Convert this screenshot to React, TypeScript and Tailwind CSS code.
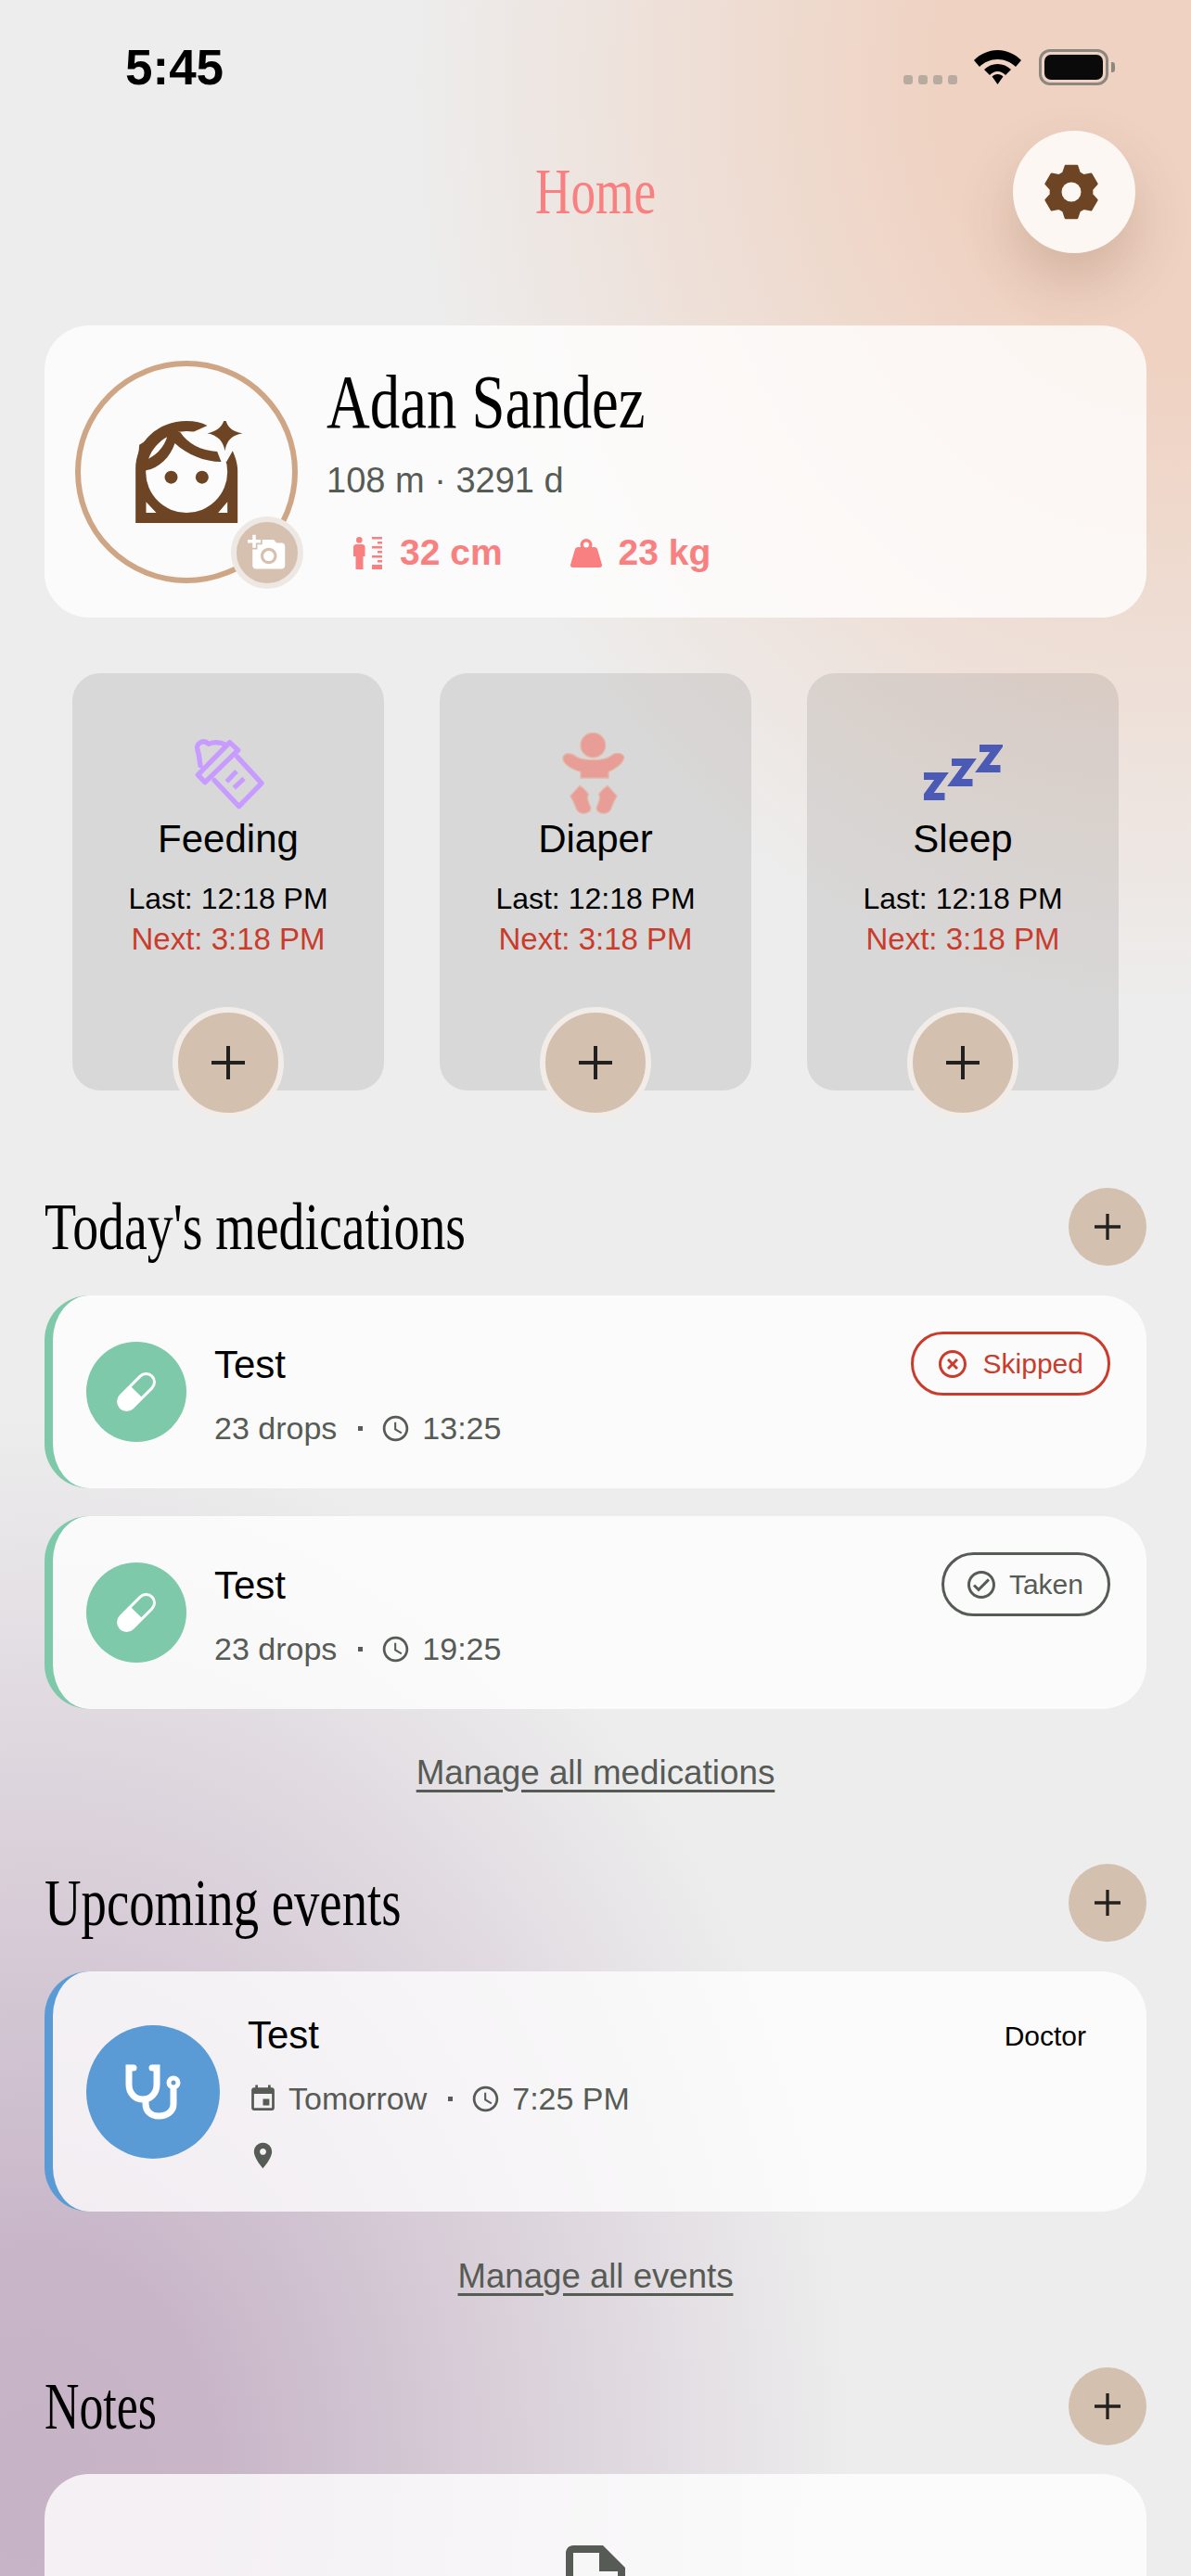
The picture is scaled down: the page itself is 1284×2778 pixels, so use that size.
import React from 'react'

const sans = "font-['Liberation_Sans','Inter',sans-serif]"
const serif = "font-['Liberation_Serif','Times_New_Roman',serif]"

const paths = {
  camera: 'M3 4V1h2v3h3v2H5v3H3V6H0V4h3zm3 6V7h3V4h7l1.83 2H21c1.1 0 2 .9 2 2v12c0 1.1-.9 2-2 2H5c-1.1 0-2-.9-2-2V10h3zm7 9c2.76 0 5-2.24 5-5s-2.24-5-5-5-5 2.24-5 5 2.24 5 5 5zm-3.2-5c0 1.77 1.43 3.2 3.2 3.2s3.2-1.43 3.2-3.2-1.43-3.2-3.2-3.2-3.2 1.43-3.2 3.2z',
  clock: 'M11.99 2C6.47 2 2 6.48 2 12s4.47 10 9.99 10C17.52 22 22 17.52 22 12S17.52 2 11.99 2zM12 20c-4.42 0-8-3.58-8-8s3.58-8 8-8 8 3.58 8 8-3.58 8-8 8zm.5-13H11v6l5.25 3.15.75-1.23-4.5-2.67z',
  skipped: 'M14.59 8L12 10.59 9.41 8 8 9.41 10.59 12 8 14.59 9.41 16 12 13.41 14.59 16 16 14.59 13.41 12 16 9.41 14.59 8zM12 2C6.47 2 2 6.47 2 12s4.47 10 10 10 10-4.47 10-10S17.53 2 12 2zm0 18c-4.41 0-8-3.59-8-8s3.59-8 8-8 8 3.59 8 8-3.59 8-8 8z',
  taken: 'M16.59 7.58L10 14.17l-2.59-2.58L6 13l4 4 8-8zM12 2C6.48 2 2 6.48 2 12s4.48 10 10 10 10-4.48 10-10S17.52 2 12 2zm0 18c-4.42 0-8-3.58-8-8s3.58-8 8-8 8 3.58 8 8-3.58 8-8 8z',
  event: 'M17 12h-5v5h5v-5zM16 1v2H8V1H6v2H5c-1.11 0-1.99.9-1.99 2L3 19c0 1.1.89 2 2 2h14c1.1 0 2-.9 2-2V5c0-1.1-.9-2-2-2h-1V1h-2zm3 18H5V8h14v11z',
  pin: 'M12 2C8.13 2 5 5.13 5 9c0 5.25 7 13 7 13s7-7.75 7-13c0-3.87-3.13-7-7-7zm0 9.5c-1.38 0-2.5-1.12-2.5-2.5s1.12-2.5 2.5-2.5 2.5 1.12 2.5 2.5-1.12 2.5-2.5 2.5z',
  doc: 'M8 16h8v2H8zm0-4h8v2H8zm6-10H6c-1.1 0-2 .9-2 2v16c0 1.1.89 2 2 2h12c1.1 0 2-.9 2-2V8l-6-6zm4 18H6V4h7v5h5v11z',
}

const MatIcon = ({ d, className }: { d: string; className: string }) => (
  <svg viewBox="0 0 24 24" fill="currentColor" className={className}>
    <path d={d} />
  </svg>
)

// six tooth gear, chunkier than the stock material one
const gearPoints = [0, 60, 120, 180, 240, 300]
  .flatMap(t => [
    [29, t - 12.5],
    [29, t + 12.5],
    [22.5, t + 23],
    [22.5, t + 37],
  ])
  .map(([r, a]) => {
    const rad = ((a - 90) * Math.PI) / 180
    return `${(r * Math.cos(rad)).toFixed(2)},${(r * Math.sin(rad)).toFixed(2)}`
  })
  .join(' ')

const GearIcon = () => (
  <svg viewBox="-36 -36 72 72" className="w-[72px] h-[72px] -ml-[6px] text-[#6d4524]">
    <polygon points={gearPoints} fill="currentColor" stroke="currentColor" strokeWidth="2" strokeLinejoin="round" />
    <circle r="10.500" fill="#fdf7f3" />
  </svg>
)

const PlusIcon = () => (
  <svg viewBox="0 0 36 36" className="w-[36px] h-[36px] text-[#23211f]" stroke="currentColor" strokeWidth="4">
    <path d="M18 0V36M0 18H36" />
  </svg>
)

const FaceIcon = () => (
  <svg viewBox="258 253 350 330" className="w-[117px] h-[110px]">
    <path fill="#6d4524" d="M258 583V410C258 320 330 253 423 253C450 253 472 258 490 268L445 288L403 290C425 325 470 350 522 352L540 385L552 385L572 350C583 375 588 395 588 415V583Z" />
    <circle cx="423" cy="418" r="132" fill="#fdfcfc" />
    <path fill="#fdfcfc" d="M292 515L325 550H292ZM555 515L525 550H555Z" />
    <path fill="#6d4524" d="M292 413C335 405 370 370 385 325C425 362 480 385 535 385L522 352C470 350 425 325 403 290L350 280L270 330L262 420Z" />
    <path fill="#fdfcfc" d="M300 375C310 345 335 318 360 305C350 335 330 360 300 375Z" />
    <circle cx="373" cy="435" r="21" fill="#6d4524" />
    <circle cx="473" cy="435" r="21" fill="#6d4524" />
    <path fill="#6d4524" d="M547 238C552 270 565 285 604 293C565 300 552 320 547 350C542 320 525 300 490 293C525 285 542 270 547 238Z" />
  </svg>
)

const HeightIcon = () => (
  <svg viewBox="0 0 31 35" className="w-[31px] h-[35px]" fill="currentColor">
    <circle cx="6.3" cy="3.4" r="3.3" />
    <path d="M0 11C0 9 1.5 8 3 8H9.5C11 8 12.5 9 12.5 11V21H10.5V35H2.5V21H0Z" />
    <path d="M20 0H31V2.5H20ZM26 5H31V7.5H26ZM20 10H31V12.5H20ZM26 15H31V17.5H26ZM20 20H31V22.5H20ZM26 25H31V27.5H26ZM20 30H31V35H20Z" />
  </svg>
)

const WeightIcon = () => (
  <svg viewBox="0 0 34 31" className="w-[34px] h-[31px]" fill="currentColor">
    <path fillRule="evenodd" d="M17 0A6.5 6.5 0 0 1 23 9H26C27.5 9 28.5 10 29 11L34 28C34.3 30 33 31 31.5 31H2.5C1 31 -.3 30 0 28L5 11C5.500 10 6.500 9 8 9H11A6.500 6.500 0 0 1 17 0ZM17 3.500A3 3 0 1 0 17 9.500A3 3 0 1 0 17 3.500Z" />
  </svg>
)

const BottleIcon = () => (
  <svg viewBox="0 0 330 300" className="w-[110px] h-[100px]" fill="none" stroke="#c79bff" strokeWidth="16" strokeLinejoin="round" strokeLinecap="round">
    <path d="M195 100L273 185L200 260L120 175" />
    <path d="M170 53L197 78L90 182L67 158Z" />
    <path d="M75 128C72 110 72 95 66 78C58 55 85 42 102 58C120 50 140 52 160 62" />
    <path d="M160 180L192 146M184 200L216 170" strokeWidth="15" strokeLinecap="butt" />
  </svg>
)

const BabyIcon = () => (
  <svg viewBox="0 0 330 300" className="w-[110px] h-[100px]" fill="#e89d97" stroke="#e2b8a8" strokeWidth="4">
    <circle cx="157" cy="62" r="40" />
    <path d="M60 100C67 85 87 88 97 95C122 115 192 115 217 95C227 85 252 85 257 100C257 120 227 140 207 148V168H117V148C92 140 57 125 60 100Z" />
    <path d="M114 193C124 200 134 208 142 220C135 232 142 248 149 262C152 280 122 292 105 272C99 255 92 240 84 226C94 215 104 204 114 193Z" />
    <path d="M204 193C194 200 184 208 176 220C183 232 176 248 169 262C166 280 196 292 213 272C219 255 226 240 234 226C224 215 214 204 204 193Z" />
  </svg>
)

const SleepIcon = () => (
  <svg viewBox="0 0 85 60" className="w-[85px] h-[60px]" fill="none" stroke="#4b5bb5" strokeWidth="8" strokeLinejoin="miter">
    <path d="M0 34H19L3 56H22.500" />
    <path d="M30 19H49L33 41H52.500" />
    <path d="M60 4H79L63 26H82.500" />
  </svg>
)

const PillIcon = () => (
  <svg viewBox="0 0 42 42" className="w-[42px] h-[42px]">
    <g transform="rotate(-45 21 21)">
      <rect x="-2.850" y="12" width="47.700" height="18" rx="9" fill="none" stroke="#fff" strokeWidth="3" />
      <path d="M21 12H6.150A9 9 0 0 0 6.150 30H21Z" fill="#fff" />
    </g>
  </svg>
)

const StethIcon = () => (
  <svg viewBox="0 0 60 60" className="w-[60px] h-[60px]" fill="none" stroke="#fff" strokeWidth="7" strokeLinecap="round">
    <path d="M9 4H4V22C4 32 11 38 19 38C27 38 34 32 34 22V4H29" />
    <path d="M22 38V43C22 51 28 56 36 56C45 56 52 51 52 43V28" />
    <circle cx="52" cy="20" r="5" strokeWidth="5" />
  </svg>
)

const tiles = [
  { label: 'Feeding', Icon: BottleIcon },
  { label: 'Diaper', Icon: BabyIcon },
  { label: 'Sleep', Icon: SleepIcon },
]

const AddButton = () => (
  <button className="w-[84px] h-[84px] rounded-full bg-[#d4c0af] flex items-center justify-center shrink-0">
    <svg viewBox="0 0 28 28" className="w-[28px] h-[28px] text-[#23211f]" stroke="currentColor" strokeWidth="3.300">
      <path d="M14 0V28M0 14H28" />
    </svg>
  </button>
)

const SectionHeader = ({ title, className, titleClass }: { title: string; className: string; titleClass: string }) => (
  <div className={`flex items-center justify-between h-[84px] ${className}`}>
    <h2 className={`${serif} text-[72px] leading-[84px] text-black whitespace-nowrap origin-left ${titleClass}`}>{title}</h2>
    <AddButton />
  </div>
)

const Dot = () => <span className="w-[5px] h-[5px] bg-[#565b56] ml-[23px] mr-[22px] shrink-0" />

const MedCard = ({ time, status }: { time: string; status: 'Skipped' | 'Taken' }) => (
  <div className="h-[208px] rounded-[48px] border-l-[9px] border-[#7dc9a9] bg-white/80 flex pl-[36px] pr-[39px]">
    <div className="w-[108px] h-[108px] mt-[50px] rounded-full bg-[#7dc9a9] flex items-center justify-center shrink-0">
      <PillIcon />
    </div>
    <div className="ml-[30px] pt-[51px]">
      <div className="text-[42px] leading-[48px] text-black">Test</div>
      <div className="mt-[24px] flex items-center text-[34px] leading-[40px] text-[#565b56]">
        <span>23 drops</span>
        <Dot />
        <MatIcon d={paths.clock} className="w-[33px] h-[33px] -ml-[3px]" />
        <span className="ml-[12px]">{time}</span>
      </div>
    </div>
    {status === 'Skipped' ? (
      <div className="ml-auto mt-[39px] h-[69px] rounded-full border-[3.5px] border-[#c93c2c] text-[#c93c2c] flex items-center pl-[27px] pr-[26px] text-[30px]">
        <MatIcon d={paths.skipped} className="w-[36px] h-[36px] -ml-[3px]" />
        <span className="ml-[15px]">Skipped</span>
      </div>
    ) : (
      <div className="ml-auto mt-[39px] h-[69px] rounded-full border-[3.5px] border-[#565b56] text-[#565b56] flex items-center pl-[25px] pr-[26px] text-[30px]">
        <MatIcon d={paths.taken} className="w-[36px] h-[36px] -ml-[3px]" />
        <span className="ml-[12px]">Taken</span>
      </div>
    )}
  </div>
)

export default function App() {
  return (
    <div
      className={`${sans} relative w-[1284px] h-[2778px] overflow-hidden bg-[#ededed] bg-[radial-gradient(ellipse_820px_1000px_at_1260px_90px,#efd2c2_0%,#efd2c2_30%,rgba(239,210,194,0)_100%),radial-gradient(ellipse_880px_1150px_at_40px_2680px,#c6b3c6_0%,#c8b6c8_22%,rgba(198,179,198,0)_100%)]`}
    >
      {/* status bar */}
      <div className="h-[141px] flex items-start pl-[135px] pr-[82px]">
        <span className="mt-[44px] text-[53px] leading-[58px] font-bold text-black">5:45</span>
        <div className="ml-auto mt-[53px] flex items-start">
          <div className="mt-[28px] flex gap-[6px]">
            {[0, 1, 2, 3].map(i => (
              <span key={i} className="w-[10px] h-[10px] rounded-[3px] bg-[#b8aca0]" />
            ))}
          </div>
          <svg viewBox="0 0 51 37" className="w-[51px] h-[37px] ml-[18px] mt-[1px]" fill="#000">
            <path d="M25.500 0C35 0 44 4 51 11L45 18C40 13 33 10 25.500 10C18 10 11 13 6 18L0 11C7 4 16 0 25.500 0Z" />
            <path d="M25.500 15C31 15 36 17 40 21L34 27C32 25 29 23 25.500 23C22 23 19 25 17 27L11 21C15 17 20 15 25.500 15Z" />
            <path d="M25.500 26C28 26 30 27 31.500 28.500L25.500 37L19.500 28.500C21 27 23 26 25.500 26Z" />
          </svg>
          <div className="ml-[19px] flex items-center">
            <div className="w-[75px] h-[39px] rounded-[12px] border-[3px] border-[#8c8880] p-[3px]">
              <div className="w-full h-full rounded-[7px] bg-[#0a0a0a]" />
            </div>
            <span className="ml-[3px] w-[4px] h-[11px] rounded-r-[3px] bg-[#8c8880]" />
          </div>
        </div>
      </div>

      {/* header */}
      <div className="h-[132px] px-[60px] grid grid-cols-[132px_1fr_132px] items-center">
        <span />
        <h1 className={`${serif} text-center text-[70px] leading-[80px] text-[#f98080] scale-x-[0.76]`}>Home</h1>
        <button className="w-[132px] h-[132px] rounded-full bg-[#fdf7f3] shadow-[0_30px_60px_rgba(110,70,40,0.22)] flex items-center justify-center">
          <GearIcon />
        </button>
      </div>

      <main className="px-[48px]">
        {/* profile */}
        <section className="mt-[78px] h-[315px] rounded-[48px] bg-white/80 flex items-center pl-[33px]">
          <div className="relative w-[240px] h-[240px] rounded-full border-[6px] border-[#cfa685] flex items-center justify-center shrink-0">
            <div className="ml-[7px]">
              <FaceIcon />
            </div>
            <div className="absolute left-[162px] top-[162px] w-[78px] h-[78px] rounded-full border-[6px] border-[#ede8e4] bg-[#d6c1b0] flex items-center justify-center text-white">
              <MatIcon d={paths.camera} className="w-[42px] h-[42px]" />
            </div>
          </div>
          <div className="ml-[31px] self-start mt-[38px]">
            <div className={`${serif} text-[82px] leading-[90px] text-black whitespace-nowrap origin-left scale-x-[0.79]`}>Adan Sandez</div>
            <div className="mt-[17px] text-[38px] leading-[44px] text-[#565b56]">108 m · 3291 d</div>
            <div className="mt-[33px] pl-[29px] flex items-center text-[39px] leading-[46px] font-bold text-[#f98080]">
              <HeightIcon />
              <span className="ml-[19px]">32 cm</span>
              <span className="ml-[73px]"><WeightIcon /></span>
              <span className="ml-[18px]">23 kg</span>
            </div>
          </div>
        </section>

        {/* trackers */}
        <section className="mt-[60px] px-[30px] flex gap-[60px]">
          {tiles.map(({ label, Icon }) => (
            <div key={label} className="relative flex-1 h-[450px] rounded-[30px] bg-black/[0.085] flex flex-col items-center">
              <div className="mt-[58px] h-[97px] flex items-center justify-center">
                <Icon />
              </div>
              <div className="text-[42px] leading-[48px] text-black">{label}</div>
              <div className="mt-[20px] text-[32px] leading-[40px] text-black">Last: 12:18 PM</div>
              <div className="mt-[4px] text-[33px] leading-[40px] text-[#c93c2c]">Next: 3:18 PM</div>
              <button className="absolute -bottom-[30px] left-[108px] w-[120px] h-[120px] rounded-full border-[6px] border-[#f1ece8] bg-[#d4c0af] flex items-center justify-center">
                <PlusIcon />
              </button>
            </div>
          ))}
        </section>

        <SectionHeader title="Today's medications" className="mt-[105px]" titleClass="scale-x-[0.775]" />
        <div className="mt-[32px] flex flex-col gap-[30px]">
          <MedCard time="13:25" status="Skipped" />
          <MedCard time="19:25" status="Taken" />
        </div>
        <div className="mt-[45px] text-center text-[36.800px] leading-[48px] text-[#565b56] underline underline-offset-[6px]">Manage all medications</div>

        <SectionHeader title="Upcoming events" className="mt-[74px]" titleClass="scale-x-[0.76]" />
        <div className="mt-[32px] h-[259px] rounded-[48px] border-l-[9px] border-[#5b9bd5] bg-white/75 flex pl-[36px] pr-[65px]">
          <div className="w-[144px] h-[144px] mt-[58px] rounded-full bg-[#5b9bd5] flex items-center justify-center shrink-0">
            <StethIcon />
          </div>
          <div className="ml-[30px] pt-[45px]">
            <div className="text-[42px] leading-[48px] text-black">Test</div>
            <div className="mt-[24px] flex items-center text-[34px] leading-[40px] text-[#565b56]">
              <MatIcon d={paths.event} className="w-[33px] h-[33px]" />
              <span className="ml-[11px]">Tomorrow</span>
              <Dot />
              <MatIcon d={paths.clock} className="w-[33px] h-[33px] -ml-[3px]" />
              <span className="ml-[12px]">7:25 PM</span>
            </div>
            <div className="mt-[25px] text-[#565b56]">
              <MatIcon d={paths.pin} className="w-[33px] h-[33px]" />
            </div>
          </div>
          <div className="ml-auto mt-[50px] text-[30px] leading-[40px] text-black">Doctor</div>
        </div>
        <div className="mt-[46px] text-center text-[36.600px] leading-[48px] text-[#565b56] underline underline-offset-[6px]">Manage all events</div>

        <SectionHeader title="Notes" className="mt-[74px]" titleClass="scale-x-[0.72]" />
        <div className="mt-[31px] h-[300px] rounded-[48px] bg-white/80 flex justify-center pt-[69px]">
          <MatIcon d={paths.doc} className="w-[96px] h-[96px] text-[#565b56]" />
        </div>
      </main>
    </div>
  )
}
